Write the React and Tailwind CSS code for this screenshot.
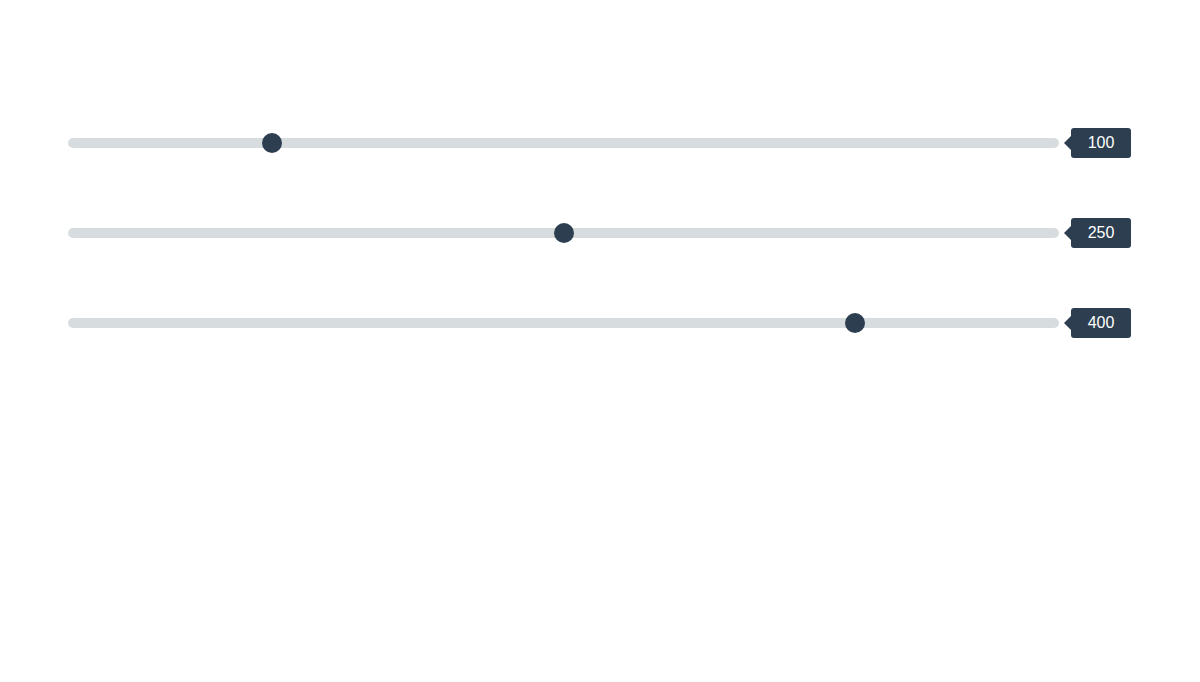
import React, { useState } from 'react';

const RangeRow = ({ initial }) => {
  const [value, setValue] = useState(initial);

  return (
    <div className="flex items-center">
      <input
        type="range"
        min="0"
        max="500"
        value={value}
        onChange={(e) => setValue(e.target.value)}
        className="flex-1 h-[10px] m-0 p-0 appearance-none rounded-[5px] bg-[#d7dcdf] outline-none cursor-pointer [&::-webkit-slider-thumb]:appearance-none [&::-webkit-slider-thumb]:w-5 [&::-webkit-slider-thumb]:h-5 [&::-webkit-slider-thumb]:rounded-full [&::-webkit-slider-thumb]:bg-[#2c3e50] [&::-webkit-slider-thumb]:border-0 [&::-moz-range-thumb]:w-5 [&::-moz-range-thumb]:h-5 [&::-moz-range-thumb]:rounded-full [&::-moz-range-thumb]:bg-[#2c3e50] [&::-moz-range-thumb]:border-0"
      />
      <span className="relative ml-[12px] w-[60px] h-[30px] flex items-center justify-center rounded-[3px] bg-[#2c3e50] text-white text-base leading-5">
        {/* little arrow pointing at the track */}
        <span className="absolute left-[-7px] top-1/2 -translate-y-1/2 w-0 h-0 border-y-[7px] border-y-transparent border-r-[7px] border-r-[#2c3e50]" />
        {value}
      </span>
    </div>
  );
};

const App = () => {
  return (
    <div className="min-h-screen bg-white pl-[68px] pr-[69px] pt-[128px] font-['Liberation_Sans',Arial,sans-serif]">
      <div className="flex flex-col gap-[60px]">
        <RangeRow initial={100} />
        <RangeRow initial={250} />
        <RangeRow initial={400} />
      </div>
    </div>
  );
};

export default App;
